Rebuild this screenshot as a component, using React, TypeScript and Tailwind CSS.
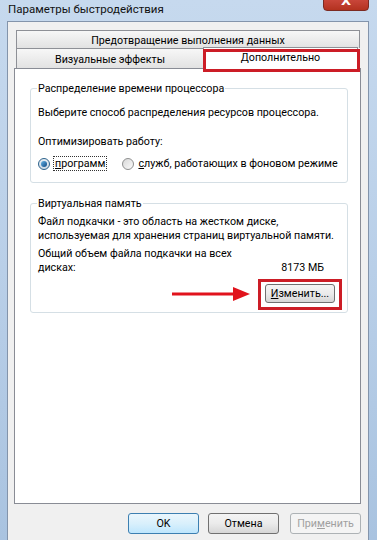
export default function App() {
  return (
    <div className="w-[377px] h-[540px] overflow-hidden relative bg-gradient-to-b from-[#c6d9ee] via-[#b9cfe8] to-[#a9c3e0] font-['Roboto',sans-serif] text-[10.7px] text-black">
      {/* Title bar */}
      <div className="h-[21px] flex items-center pl-[8px] relative">
        <span className="text-[11.5px] leading-[16px] -mt-[3px] text-[#111]">Параметры быстродействия</span>
        <div className="absolute left-[323px] w-[46px] -top-[11px] h-[22px] rounded-b-[4px] border border-[#7c2a22] bg-gradient-to-b from-[#e09a8e] via-[#c9463a] to-[#b3321f] flex items-center justify-center">
          <span className="text-white font-bold text-[13px] leading-none font-['DejaVu_Sans',sans-serif]">X</span>
        </div>
      </div>

      {/* Dialog body */}
      <div className="ml-[7px] mr-[8px] h-[520px] border border-[#8394ab] bg-[#f0f0f0] pl-[6px] pr-[7px] pt-[8px] flex flex-col">
        {/* Tabs */}
        <div className="ml-[2px] mr-[1px] flex flex-col">
          <div className="h-[18px] border border-b-0 border-[#8e9096] bg-gradient-to-b from-[#f7f7f7] to-[#e2e2e2] flex items-center justify-center">
            <span className="leading-[14px] mt-[2px] whitespace-nowrap">Предотвращение выполнения данных</span>
          </div>
          <div className="h-[20px] flex items-end relative z-10">
            <div className="h-[20px] w-[188px] border border-b-0 border-[#8e9096] bg-gradient-to-b from-[#f7f7f7] to-[#e2e2e2] flex items-center justify-center">
              <span className="leading-[14px] mt-[2px] whitespace-nowrap">Визуальные эффекты</span>
            </div>
            <div className="relative h-[23px] w-[155px] -ml-[1px] -mb-[2px] border border-b-0 border-[#8e9096] bg-white flex items-start justify-center pt-[2px]">
              <span className="leading-[14px] mt-[1px] whitespace-nowrap">Дополнительно</span>
              <span className="absolute -left-[1px] -right-[3px] top-[1px] -bottom-[2px] border-[3px] border-[#cc1d26]"></span>
            </div>
          </div>
        </div>

        {/* Tab panel */}
        <div className="h-[436px] border border-[#898c95] bg-white flex flex-col pl-[15px] pr-[12px] pt-[12px]">
          <fieldset className="min-w-0 border border-[#d5dfe5] rounded-[3px] pl-[7px] pr-[8px] pt-[9px] pb-[11px]">
            <legend className="leading-[15px] px-[1px] -ml-[1px]">Распределение времени процессора</legend>
            <div className="leading-[15px] whitespace-nowrap">Выберите способ распределения ресурсов процессора.</div>
            <div className="leading-[15px] mt-[14px]">Оптимизировать работу:</div>
            <div className="mt-[7px] h-[15px] flex items-center whitespace-nowrap">
              <span className="w-[12px] h-[12px] shrink-0 rounded-full border border-[#2c628b] bg-gradient-to-b from-[#e8eef4] to-[#cdd9e4] flex items-center justify-center">
                <span className="w-[6px] h-[6px] rounded-full bg-gradient-to-br from-[#66b4e6] to-[#0e4a84]"></span>
              </span>
              <span className="ml-[3px] px-[1px] leading-[13px] border border-dotted border-[#333]">
                <span className="underline">п</span>рограмм
              </span>
              <span className="ml-[15px] w-[12px] h-[12px] shrink-0 rounded-full border border-[#8e8f8f] bg-gradient-to-br from-[#d8d8d8] to-[#fbfbfb]"></span>
              <span className="ml-[4px] leading-[15px]">
                <span className="underline">с</span>лужб, работающих в фоновом режиме
              </span>
            </div>
          </fieldset>

          <fieldset className="min-w-0 mt-[13px] border border-[#d5dfe5] rounded-[3px] pl-[7px] pr-[12px] pt-[4px] pb-[9px] flex flex-col">
            <legend className="leading-[15px] px-[1px] -ml-[1px]">Виртуальная память</legend>
            <div className="leading-[14px] whitespace-nowrap">
              Файл подкачки - это область на жестком диске,
              <br />
              используемая для хранения страниц виртуальной памяти.
            </div>
            <div className="mt-[4px] flex items-end justify-between pr-[11px] leading-[14px]">
              <div className="whitespace-nowrap">
                Общий объем файла подкачки на всех
                <br />
                дисках:
              </div>
              <div className="whitespace-nowrap">8173 МБ</div>
            </div>
            <div className="mt-[9px] self-end relative">
              <svg className="absolute right-full mr-[15px] top-1/2 -translate-y-1/2" width="78" height="14" viewBox="0 0 78 14">
                <rect x="0" y="5.5" width="64" height="3" fill="#e1131c" />
                <polygon points="61,0 78,7 61,14" fill="#e1131c" />
              </svg>
              <div className="w-[70px] h-[19px] rounded-[3px] border border-[#707070] bg-gradient-to-b from-[#f4f4f4] via-[#ebebeb] to-[#d6d6d6] flex items-center justify-center leading-[14px]">
                <span>
                  <span className="underline">И</span>зменить...
                </span>
              </div>
              <span className="absolute -left-[7px] -right-[7px] -top-[5px] -bottom-[7px] border-[3px] border-[#cc1d26]"></span>
            </div>
          </fieldset>
        </div>

        {/* Buttons */}
        <div className="mt-[9px] flex justify-end">
          <div className="w-[71px] h-[21px] rounded-[3px] border border-[#3c7fb1] bg-gradient-to-b from-[#eaf6fd] via-[#d9f0fc] to-[#bee6fd] flex items-center justify-center leading-[14px]">
            OK
          </div>
          <div className="ml-[9px] w-[71px] h-[21px] rounded-[3px] border border-[#707070] bg-gradient-to-b from-[#f4f4f4] via-[#ebebeb] to-[#d6d6d6] flex items-center justify-center leading-[14px]">
            Отмена
          </div>
          <div className="ml-[11px] w-[71px] h-[21px] rounded-[3px] border border-[#adb2b5] bg-[#f4f4f4] flex items-center justify-center leading-[14px] text-[#a0a0a0]">
            <span>
              При<span className="underline">м</span>енить
            </span>
          </div>
        </div>
      </div>
    </div>
  );
}
